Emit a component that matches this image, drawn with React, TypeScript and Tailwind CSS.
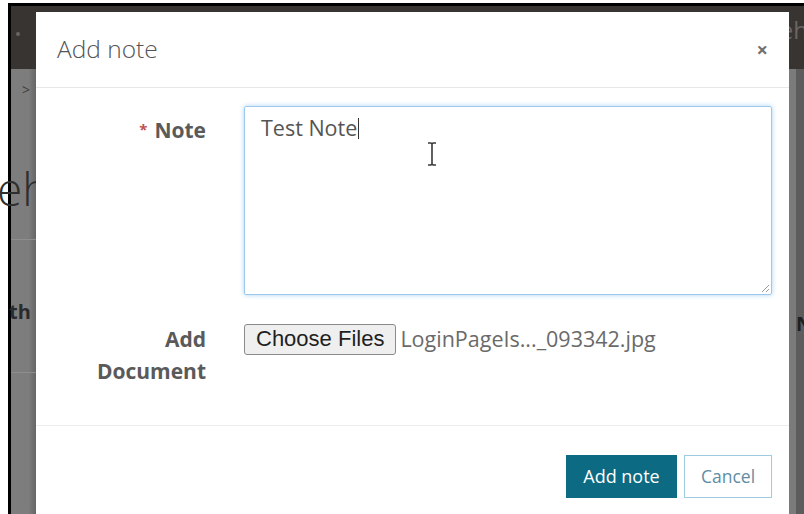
import { useState } from "react";

// Mouse I-beam pointer drawn over the text box
function IBeam() {
  return (
    <svg width="14" height="26" viewBox="0 0 14 26" className="block">
      <path
        d="M3 2h3l1 1 1-1h3M7 3v20M3 24h3l1-1 1 1h3"
        fill="none"
        stroke="#ffffff"
        strokeWidth="3.5"
        strokeLinecap="round"
      />
      <path
        d="M3 2h3l1 1 1-1h3M7 3v20M3 24h3l1-1 1 1h3"
        fill="none"
        stroke="#3a3a3a"
        strokeWidth="1.6"
      />
    </svg>
  );
}

function ResizeGrip() {
  return (
    <svg width="10" height="10" viewBox="0 0 10 10" className="block">
      <path d="M9 2L2 9M9 6L6 9" stroke="#9a9a9a" strokeWidth="1" />
    </svg>
  );
}

function Backdrop() {
  return (
    <div className="flex h-full flex-col">
      {/* page header behind the overlay */}
      <div className="flex h-[63px] items-start justify-between bg-[#383431]">
        <span className="ml-[5px] mt-[26px] h-[4px] w-[4px] rounded-full bg-[#6a6561]" />
        <span className="mt-[12px] text-[24px] leading-none text-[#6b6662] [font-family:'Open_Sans',sans-serif]">
          eh
        </span>
      </div>
      <div className="flex flex-1 justify-between bg-[#7b7b7b]">
        <div className="flex w-[25px] flex-col bg-gradient-to-r from-[#7d7d7d] from-70% to-[#666666]">
          <span className="ml-[11px] mt-[14px] text-[14px] leading-none text-[#3f3f3f] [font-family:'Open_Sans',sans-serif]">
            &gt;
          </span>
          <span className="-ml-[14px] mt-[68px] text-[46px] font-light leading-none text-[#2e2e2e] [font-family:'Open_Sans',sans-serif]">
            eh
          </span>
          <div className="mt-[28px] h-px bg-[#8e8e8e]" />
          <span className="-ml-[2px] mt-[62px] text-[20px] font-bold leading-none text-[#2a2a2a] [font-family:'Open_Sans',sans-serif]">
            th
          </span>
          <div className="mt-[50px] h-px bg-[#8e8e8e]" />
        </div>
        <div className="flex w-[12px] flex-col bg-[#5c5c5c]">
          <span className="mt-[245px] text-[20px] font-bold leading-none text-[#1f1f1f] [font-family:'Open_Sans',sans-serif]">
            N
          </span>
        </div>
      </div>
    </div>
  );
}

export default function App() {
  const [note, setNote] = useState("Test Note");

  return (
    <div className="relative h-[514px] w-[804px] overflow-hidden bg-white [font-family:'Open_Sans',sans-serif]">
      {/* framed page */}
      <div className="ml-[8px] mt-[3px] h-[516px] w-[800px] border-l-[3px] border-t-[3px] border-black">
        <Backdrop />
      </div>

      {/* Add note dialog */}
      <div className="absolute left-[36px] top-[12px] flex h-[506px] w-[753px] flex-col bg-white">
        <div className="flex h-[76px] items-center justify-between border-b border-[#e8e8e8] pl-[21px] pr-[21px]">
          <h2 className="text-[24.5px] font-light text-[#555555]">Add note</h2>
          <button className="text-[20px] font-bold leading-none text-[#707070]">×</button>
        </div>

        <div className="grid h-[338px] grid-cols-[170px_528px] content-start gap-x-[38px] gap-y-[28px] border-b border-[#ececec] pt-[18px]">
          <label className="pt-[10px] text-right text-[21px] font-bold leading-[26px] text-[#5a5a5a]">
            <span className="mr-[7px] text-[15px] align-[3px] text-[#c0504d]">*</span>
            Note
          </label>
          <div className="relative h-[189px] rounded-[2px] border border-[#9dc8ec] shadow-[0_0_5px_rgba(102,175,233,0.55)]">
            <div className="flex items-center pl-[16px] pt-[8px]">
              <span className="text-[21.5px] leading-[26px] text-[#555555]">{note}</span>
              <span className="ml-[1px] h-[21px] w-px bg-[#333333]" />
            </div>
            <textarea
              value={note}
              onChange={(e) => setNote(e.target.value)}
              className="hidden"
            />
            <div className="absolute left-[180px] top-[34px]">
              <IBeam />
            </div>
            <div className="absolute bottom-[1px] right-[1px]">
              <ResizeGrip />
            </div>
          </div>

          <label className="text-right text-[21px] font-bold leading-[32px] text-[#5a5a5a]">
            Add
            <br />
            Document
          </label>
          <div className="flex items-center self-start">
            <button className="h-[31px] rounded-[3px] border border-[#8a8a8a] bg-[#efefef] px-[11px] text-[22px] leading-none text-[#1f1f1f] [font-family:'Liberation_Sans',Arial,sans-serif]">
              Choose Files
            </button>
            <span className="ml-[4px] text-[21.5px] text-[#6a6a6a]">LoginPageIs..._093342.jpg</span>
          </div>
        </div>

        <div className="flex justify-end gap-[7px] pr-[17px] pt-[29px]">
          <button className="h-[43px] w-[111px] bg-[#0c6a83] text-[18px] text-white">Add note</button>
          <button className="h-[43px] w-[88px] border border-[#9fcbe0] bg-white text-[17.5px] text-[#5f8da3]">
            Cancel
          </button>
        </div>
      </div>
    </div>
  );
}
